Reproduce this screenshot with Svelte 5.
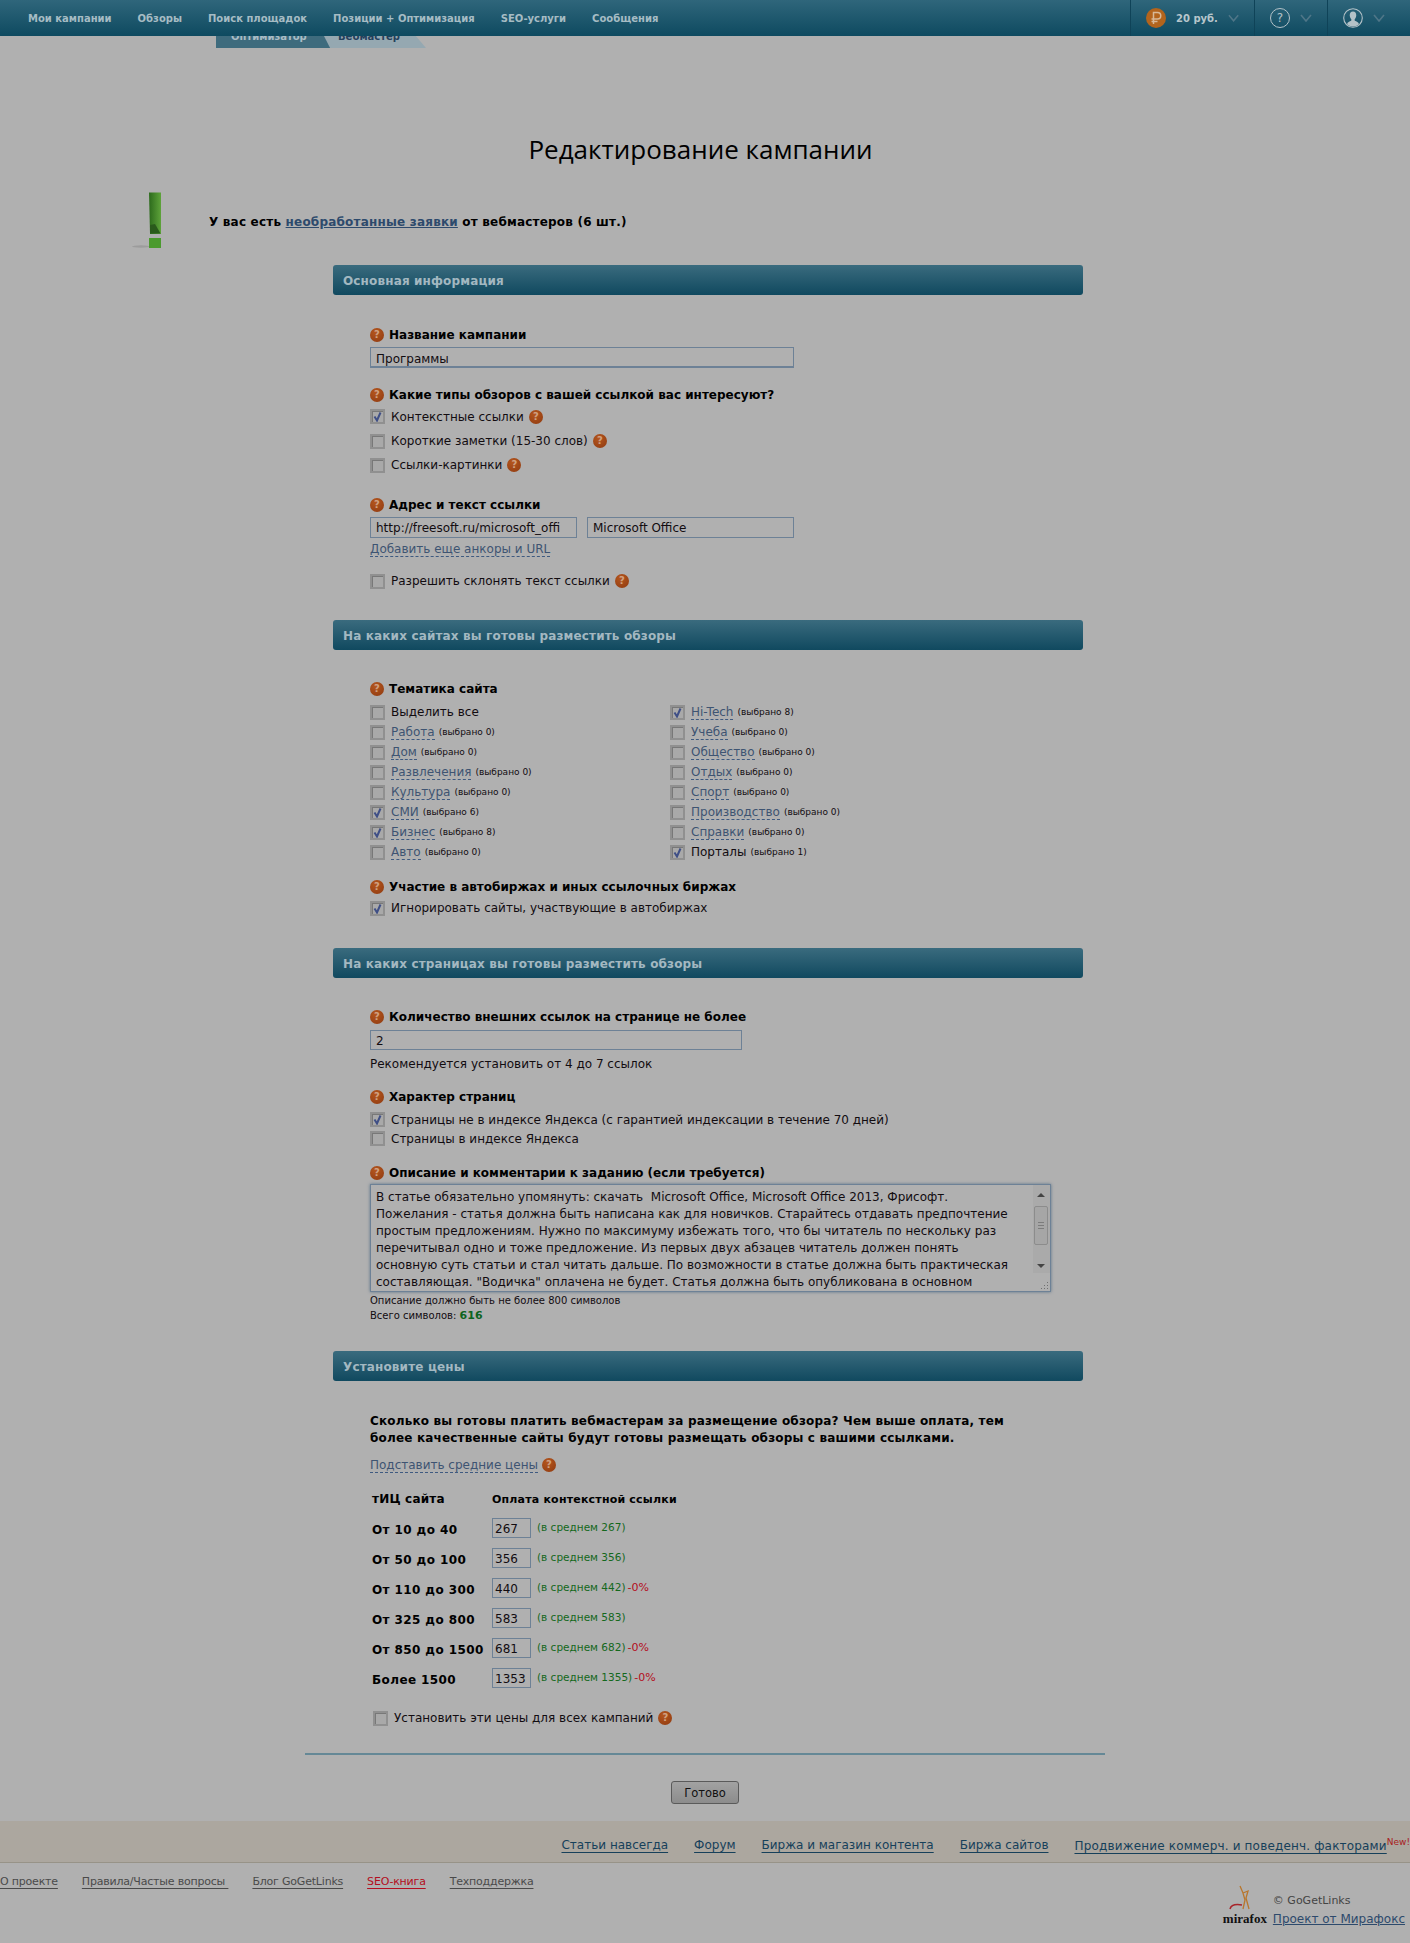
<script>
    const navItems = ["Мои кампании", "Обзоры", "Поиск площадок", "Позиции + Оптимизация", "SEO-услуги", "Сообщения"];

    const themesLeft = [
        { name: "Выделить все", plain: true },
        { name: "Работа", count: 0 },
        { name: "Дом", count: 0 },
        { name: "Развлечения", count: 0 },
        { name: "Культура", count: 0 },
        { name: "СМИ", count: 6, on: true },
        { name: "Бизнес", count: 8, on: true },
        { name: "Авто", count: 0 }
    ];
    const themesRight = [
        { name: "Hi-Tech", count: 8, on: true },
        { name: "Учеба", count: 0 },
        { name: "Общество", count: 0 },
        { name: "Отдых", count: 0 },
        { name: "Спорт", count: 0 },
        { name: "Производство", count: 0 },
        { name: "Справки", count: 0 },
        { name: "Порталы", count: 1, on: true, plainLink: true }
    ];

    const prices = [
        { range: "От 10 до 40", value: 267, avg: 267 },
        { range: "От 50 до 100", value: 356, avg: 356 },
        { range: "От 110 до 300", value: 440, avg: 442, off: true },
        { range: "От 325 до 800", value: 583, avg: 583 },
        { range: "От 850 до 1500", value: 681, avg: 682, off: true },
        { range: "Более 1500", value: 1353, avg: 1355, off: true }
    ];

    const descLines = [
        "В статье обязательно упомянуть: скачать  Microsoft Office, Microsoft Office 2013, Фрисофт.",
        "Пожелания - статья должна быть написана как для новичков. Старайтесь отдавать предпочтение",
        "простым предложениям. Нужно по максимуму избежать того, что бы читатель по нескольку раз",
        "перечитывал одно и тоже предложение. Из первых двух абзацев читатель должен понять",
        "основную суть статьи и стал читать дальше. По возможности в статье должна быть практическая",
        "составляющая. \"Водичка\" оплачена не будет. Статья должна быть опубликована в основном"
    ];

    const footerTop = ["Статьи навсегда", "Форум", "Биржа и магазин контента", "Биржа сайтов"];
    const footerBottom = ["О проекте", "Правила/Частые вопросы ", "Блог GoGetLinks", "SEO-книга", "Техподдержка"];
</script>

{#snippet help()}
    <span class="help">?</span>
{/snippet}

{#snippet check(on)}
    <span class="box">
        {#if on}
            <svg width="11" height="11" viewBox="0 0 11 11"><path d="M2.5 5.5 L5 9.5 L8.5 1.5" fill="none" stroke="#3f4f86" stroke-width="2" /></svg>
        {/if}
    </span>
{/snippet}

{#snippet chevron()}
    <svg class="chev" width="12" height="8" viewBox="0 0 12 8"><path d="M1 1 L6 7 L11 1" fill="none" stroke="#4f7688" stroke-width="1.6" /></svg>
{/snippet}

{#snippet theme(t)}
    <div class="theme">
        {@render check(t.on)}
        {#if t.plain || t.plainLink}
            <span class="cb-text">{t.name}</span>
        {:else}
            <span class="dash">{t.name}</span>
        {/if}
        {#if !t.plain}
            <span class="count">(выбрано {t.count})</span>
        {/if}
    </div>
{/snippet}

<header class="topbar">
    <nav class="nav">
        {#each navItems as item}
            <span>{item}</span>
        {/each}
    </nav>
    <div class="tools">
        <div class="tool money">
            <span class="coin">
                <svg width="12" height="14" viewBox="0 0 12 14"><path d="M3.5 13 V1.5 H7.5 A3.2 3.2 0 0 1 7.5 8 H1.5 M1.5 10.5 H7.5" fill="none" stroke="#d8b896" stroke-width="1.5" /></svg>
            </span>
            <span class="sum">20 руб.</span>
            {@render chevron()}
        </div>
        <div class="tool help-tool">
            <span class="ring">?</span>
            {@render chevron()}
        </div>
        <div class="tool user-tool">
            <svg width="20" height="20" viewBox="0 0 20 20">
                <circle cx="10" cy="10" r="9.3" fill="none" stroke="#b4c2c8" stroke-width="1.1" />
                <path d="M10 3.5 C7.5 3.5 6.5 5.5 6.8 8 C7 9.6 7.8 10.8 8.4 11.4 L8.2 12.8 C6.5 13.6 4.6 14 4 16.3 A9 9 0 0 0 16 16.3 C15.4 14 13.5 13.6 11.8 12.8 L11.6 11.4 C12.2 10.8 13 9.6 13.2 8 C13.5 5.5 12.5 3.5 10 3.5 Z" fill="#b4c2c8" />
            </svg>
            {@render chevron()}
        </div>
    </div>
</header>

<div class="tabs">
    <span class="tab tab-one">Оптимизатор</span>
    <span class="tab tab-two">Вебмастер</span>
</div>

<h1>Редактирование кампании</h1>

<div class="notice">
    <svg class="bang" width="30" height="56" viewBox="0 0 30 56">
        <defs>
            <linearGradient id="bangFill" x1="0" x2="1" y1="0" y2="0">
                <stop offset="0" stop-color="#2c6a1c" />
                <stop offset="1" stop-color="#5ea33a" />
            </linearGradient>
        </defs>
        <ellipse cx="9" cy="54.5" rx="9" ry="1.2" fill="#9c9c9c" />
        <path d="M17 0.5 H29 V42 H18 Z" fill="url(#bangFill)" />
        <path d="M18 33 L23 32 L28.5 41.5 H18 Z" fill="#2a5a1c" />
        <rect x="17" y="46" width="12" height="10" fill="#4b9a2e" />
    </svg>
    <p>У вас есть <a href="#top">необработанные заявки</a> от вебмастеров (6 шт.)</p>
</div>

<main class="form">
    <h2 class="bar">Основная информация</h2>
    <section class="body first-body">
        <div class="label top32">{@render help()}Название кампании</div>
        <div class="field wide">Программы</div>

        <div class="label top19">{@render help()}Какие типы обзоров с вашей ссылкой вас интересуют?</div>
        <div class="rows24">
            <div class="cb">{@render check(true)}<span class="cb-text">Контекстные ссылки</span>{@render help()}</div>
            <div class="cb">{@render check(false)}<span class="cb-text">Короткие заметки (15-30 слов)</span>{@render help()}</div>
            <div class="cb">{@render check(false)}<span class="cb-text">Ссылки-картинки</span>{@render help()}</div>
        </div>

        <div class="label top20">{@render help()}Адрес и текст ссылки</div>
        <div class="pair">
            <div class="field half">http://freesoft.ru/microsoft_offi</div>
            <div class="field half">Microsoft Office</div>
        </div>
        <div class="more"><span class="dash">Добавить еще анкоры и URL</span></div>
        <div class="cb lone">{@render check(false)}<span class="cb-text">Разрешить склонять текст ссылки</span>{@render help()}</div>
    </section>

    <h2 class="bar">На каких сайтах вы готовы разместить обзоры</h2>
    <section class="body second-body">
        <div class="label top31">{@render help()}Тематика сайта</div>
        <div class="themes">
            <div>
                {#each themesLeft as t}
                    {@render theme(t)}
                {/each}
            </div>
            <div>
                {#each themesRight as t}
                    {@render theme(t)}
                {/each}
            </div>
        </div>
        <div class="label top17">{@render help()}Участие в автобиржах и иных ссылочных биржах</div>
        <div class="cb row20">{@render check(true)}<span class="cb-text">Игнорировать сайты, участвующие в автобиржах</span></div>
    </section>

    <h2 class="bar">На каких страницах вы готовы разместить обзоры</h2>
    <section class="body third-body">
        <div class="label top31">{@render help()}Количество внешних ссылок на странице не более</div>
        <div class="field count-field">2</div>
        <div class="note">Рекомендуется установить от 4 до 7 ссылок</div>

        <div class="label top17">{@render help()}Характер страниц</div>
        <div class="rows19">
            <div class="cb">{@render check(true)}<span class="cb-text">Страницы не в индексе Яндекса (с гарантией индексации в течение 70 дней)</span></div>
            <div class="cb">{@render check(false)}<span class="cb-text">Страницы в индексе Яндекса</span></div>
        </div>

        <div class="label top17">{@render help()}Описание и комментарии к заданию (если требуется)</div>
        <div class="textarea">
            {#each descLines as line}
                <div class="desc-line">{line}</div>
            {/each}
            <div class="scroll">
                <span class="arrow up"></span>
                <span class="thumb"></span>
                <span class="arrow down"></span>
            </div>
            <svg class="grip" width="9" height="9" viewBox="0 0 9 9"><path d="M7 1 h1 v1 h-1 z M4 4 h1 v1 h-1 z M7 4 h1 v1 h-1 z M1 7 h1 v1 h-1 z M4 7 h1 v1 h-1 z M7 7 h1 v1 h-1 z" fill="#707070" /></svg>
        </div>
        <div class="hint">Описание должно быть не более 800 символов</div>
        <div class="hint">Всего символов: <b class="total">616</b></div>
    </section>

    <h2 class="bar">Установите цены</h2>
    <section class="body">
        <p class="lead">Сколько вы готовы платить вебмастерам за размещение обзора? Чем выше оплата, тем<br />более качественные сайты будут готовы размещать обзоры с вашими ссылками.</p>
        <div class="more avg"><span class="dash">Подставить средние цены</span>{@render help()}</div>
        <div class="prices">
            <b class="th th-one">тИЦ сайта</b>
            <b class="th">Оплата контекстной ссылки</b>
            {#each prices as p}
                <b class="range">{p.range}</b>
                <div class="price-cell">
                    <span class="price-input">{p.value}</span>
                    <span class="avg-text">(в среднем {p.avg})</span>
                    {#if p.off}<span class="off">-0%</span>{/if}
                </div>
            {/each}
        </div>
        <div class="cb all">{@render check(false)}<span class="cb-text">Установить эти цены для всех кампаний</span>{@render help()}</div>
    </section>
</main>

<hr class="rule" />

<div class="submit"><button type="button">Готово</button></div>

<div class="band">
    {#each footerTop as link}
        <a href="#top">{link}</a>
    {/each}
    <span class="last"><a href="#top">Продвижение коммерч. и поведенч. факторами</a><sup>New!</sup></span>
</div>

<footer class="foot">
    <div class="foot-links">
        {#each footerBottom as link}
            <a href="#top" class:red={link === "SEO-книга"}>{link}</a>
        {/each}
    </div>
    <div class="brand">
        <div class="logo">
            <svg width="44" height="28" viewBox="0 0 44 28">
                <path d="M17 1 L20 8 L25 6 L23 13 L26 24 M20 8 L22 15 L20 24" fill="none" stroke="#b8762c" stroke-width="1.3" />
                <path d="M7 24 C8 20 13 19 19 20" fill="none" stroke="#a8242a" stroke-width="1.5" />
            </svg>
            <span class="logo-word">mirafox</span>
        </div>
        <div class="brand-text">
            <div class="copy">© GoGetLinks</div>
            <a href="#top">Проект от Мирафокс</a>
        </div>
    </div>
</footer>

<style>
    :global(body) {
        background: #b0b0b0;
        font-family: "DejaVu Sans", Verdana, sans-serif;
        font-size: 12px;
        color: #120c10;
    }
    .topbar {
        height: 36px;
        display: flex;
        justify-content: space-between;
        background: linear-gradient(#2f667b, #0e4a60);
    }
    .nav {
        display: flex;
        gap: 26px;
        padding-left: 28px;
        align-items: center;
        font-size: 10px;
        font-weight: bold;
        color: #a6bcc4;
    }
    .tools {
        display: flex;
    }
    .tool {
        display: flex;
        align-items: center;
        gap: 10px;
        padding: 0 15px;
        border-left: 1px solid #0f4358;
        height: 36px;
        box-sizing: border-box;
    }
    .money {
        width: 124px;
    }
    .help-tool {
        width: 73px;
    }
    .user-tool {
        width: 83px;
    }
    .coin {
        flex: none;
        width: 20px;
        height: 20px;
        border-radius: 50%;
        background: #b3641c;
        display: flex;
        align-items: center;
        justify-content: center;
    }
    .sum {
        color: #b7c6cc;
        font-weight: bold;
        font-size: 10px;
        width: 42px;
        white-space: nowrap;
    }
    .ring {
        flex: none;
        width: 18px;
        height: 18px;
        border: 1px solid #b4c2c8;
        border-radius: 50%;
        color: #b4c2c8;
        text-align: center;
        line-height: 18px;
        font-size: 12px;
    }
    .tabs {
        display: flex;
        height: 12px;
        overflow: hidden;
        padding-left: 216px;
    }
    .tab {
        height: 12px;
        font-size: 10px;
        font-weight: bold;
        line-height: 2px;
        box-sizing: border-box;
    }
    .tab-one {
        width: 114px;
        background: #3e6b7d;
        color: #a9bdc6;
        padding-left: 15px;
    }
    .tab-two {
        width: 102px;
        margin-left: -6px;
        padding-left: 14px;
        background: #95a8b1;
        color: #24405c;
        clip-path: polygon(0 0, 90% 0, 100% 100%, 6% 100%);
    }
    h1 {
        margin: 79px 9px 0 0;
        height: 44px;
        line-height: 44px;
        text-align: center;
        font-family: "Open Sans", sans-serif;
        font-size: 26px;
        font-weight: normal;
        color: #000;
    }
    .notice {
        display: flex;
        align-items: center;
        margin: 21px 0 0 132px;
        height: 56px;
    }
    .bang {
        flex: none;
    }
    .notice p {
        margin: 4px 0 0 47px;
        font-weight: bold;
        letter-spacing: 0.2px;
        color: #000;
    }
    .notice a {
        color: #2d4a6c;
    }
    .form {
        width: 750px;
        margin: 17px 0 0 333px;
    }
    .bar {
        margin: 0;
        height: 30px;
        line-height: 33px;
        padding-left: 10px;
        border-radius: 3px;
        background: linear-gradient(#3a6b7e, #10495f);
        font-size: 12px;
        font-weight: bold;
        letter-spacing: 0.15px;
        color: #a3b8c1;
    }
    .body {
        padding-left: 37px;
    }
    .first-body {
        padding-bottom: 27px;
    }
    .second-body {
        padding-bottom: 30px;
    }
    .third-body {
        padding-bottom: 28px;
    }
    .label {
        display: flex;
        align-items: center;
        height: 16px;
        font-weight: bold;
        color: #000;
        white-space: nowrap;
    }
    .top32 { margin-top: 32px; }
    .top31 { margin-top: 31px; }
    .top20 { margin-top: 20px; }
    .top19 { margin-top: 19px; }
    .top17 { margin-top: 17px; }
    .help {
        flex: none;
        display: inline-block;
        width: 14px;
        height: 14px;
        margin-right: 5px;
        border-radius: 50%;
        background: radial-gradient(circle at 40% 30%, #b4561e, #8f3a10);
        color: #d0a080;
        font-size: 10px;
        font-weight: bold;
        line-height: 14px;
        text-align: center;
    }
    .field {
        box-sizing: border-box;
        height: 21px;
        line-height: 23px;
        padding-left: 5px;
        border: 1px solid #6d8196;
        border-bottom-width: 2px;
        white-space: nowrap;
        overflow: hidden;
    }
    .wide {
        width: 424px;
        margin-top: 4px;
    }
    .half {
        width: 207px;
        border-bottom-width: 1px;
        line-height: 21px;
    }
    .pair {
        display: flex;
        gap: 10px;
        width: 424px;
        margin-top: 4px;
    }
    .count-field {
        width: 372px;
        height: 20px;
        line-height: 20px;
        margin-top: 5px;
        border-bottom-width: 1px;
    }
    .rows24 {
        margin-top: 1px;
    }
    .rows24 .cb,
    .cb.lone,
    .cb.all {
        height: 24px;
    }
    .rows24 .cb:first-child {
        height: 25px;
    }
    .rows19 {
        margin-top: 5px;
    }
    .rows19 .cb {
        height: 19px;
    }
    .row20 {
        height: 20px;
        margin-top: 3px;
    }
    .cb {
        display: flex;
        align-items: center;
        white-space: nowrap;
    }
    .cb .help {
        margin-left: 5px;
        margin-right: 0;
    }
    .cb.lone {
        margin-top: 12px;
    }
    .cb.all {
        margin: 12px 0 0 3px;
    }
    .box {
        flex: none;
        box-sizing: border-box;
        display: flex;
        align-items: center;
        justify-content: center;
        width: 15px;
        height: 15px;
        margin-right: 6px;
        border: 2px solid #909090;
        box-shadow: inset 1px 1px 0 #787878;
        background: #a9a9a9;
    }
    .more {
        display: flex;
        align-items: center;
        height: 16px;
        margin-top: 3px;
    }
    .more.avg {
        margin-top: 10px;
    }
    .more .help {
        margin: 0 0 0 4px;
    }
    .dash {
        color: #3e5472;
        border-bottom: 1px dashed #3e5a80;
        line-height: 14px;
    }
    .themes {
        display: flex;
        margin-top: 5px;
    }
    .themes > div {
        width: 300px;
    }
    .theme {
        display: flex;
        align-items: center;
        height: 20px;
        white-space: nowrap;
    }
    .count {
        margin-left: 4px;
        font-size: 9px;
    }
    .note {
        height: 16px;
        line-height: 16px;
        margin-top: 6px;
    }
    .textarea {
        position: relative;
        box-sizing: border-box;
        width: 681px;
        height: 108px;
        margin-top: 3px;
        padding: 4px 5px;
        overflow: hidden;
        border: 1px solid #6d8196;
        box-shadow: 0 0 3px #5d7488;
    }
    .desc-line {
        height: 17px;
        line-height: 17px;
        white-space: pre;
    }
    .scroll {
        position: absolute;
        top: 0;
        right: 0;
        width: 17px;
        height: 88px;
        background: #aaaaaa;
    }
    .arrow {
        position: absolute;
        left: 4px;
        border-left: 4px solid transparent;
        border-right: 4px solid transparent;
    }
    .up {
        top: 8px;
        border-bottom: 4px solid #444;
    }
    .down {
        bottom: 5px;
        border-top: 4px solid #444;
    }
    .thumb {
        position: absolute;
        top: 21px;
        left: 1px;
        width: 14px;
        height: 39px;
        border: 1px solid #8c8c8c;
        border-radius: 2px;
        box-sizing: border-box;
        background: #a6a6a6;
    }
    .thumb::after {
        content: "";
        position: absolute;
        top: 15px;
        left: 3px;
        width: 6px;
        height: 7px;
        background: repeating-linear-gradient(#7c7c7c 0 1px, transparent 1px 3px);
    }
    .grip {
        position: absolute;
        right: 1px;
        bottom: 1px;
    }
    .hint {
        height: 15px;
        line-height: 15px;
        font-size: 10px;
    }
    .textarea + .hint {
        margin-top: 1px;
    }
    .total {
        color: #0d6420;
        font-size: 11px;
    }
    .lead {
        margin: 32px 0 0;
        line-height: 17px;
        font-weight: bold;
        letter-spacing: 0.18px;
        color: #000;
        white-space: nowrap;
    }
    .prices {
        display: grid;
        grid-template-columns: 122px 1fr;
        grid-auto-rows: 30px;
        align-items: center;
        margin-top: 11px;
    }
    .th {
        font-size: 11px;
        letter-spacing: 0.2px;
        color: #000;
        white-space: nowrap;
    }
    .th-one,
    .range {
        padding-left: 2px;
        white-space: nowrap;
        color: #000;
        font-size: 12px;
    }
    .range {
        padding-top: 2px;
        letter-spacing: 0.4px;
    }
    .price-cell {
        display: flex;
        align-items: center;
        margin-top: -2px;
        white-space: nowrap;
    }
    .price-input {
        box-sizing: border-box;
        width: 39px;
        height: 20px;
        line-height: 20px;
        padding-left: 2px;
        border: 1px solid #6d8196;
    }
    .avg-text {
        margin: 0 0 2px 6px;
        color: #14681c;
        font-size: 10.5px;
    }
    .off {
        margin: 0 0 2px 2px;
        color: #b40e20;
        font-size: 11px;
    }
    .rule {
        width: 800px;
        height: 2px;
        margin: 23px 0 0 305px;
        padding: 0;
        border: none;
        background: #658896;
    }
    .submit {
        display: flex;
        justify-content: center;
        margin-top: 26px;
    }
    button {
        width: 68px;
        height: 23px;
        padding: 0;
        border: 1px solid #5a5a5a;
        border-radius: 3px;
        background: linear-gradient(#a2a2a2, #8c8c8c);
        font-family: inherit;
        font-size: 11.5px;
        color: #111;
    }
    .band {
        box-sizing: border-box;
        display: flex;
        justify-content: flex-end;
        align-items: center;
        gap: 26px;
        height: 42px;
        margin-top: 17px;
        padding-top: 7px;
        background: #aca79f;
        border-bottom: 1px solid #979388;
    }
    .band a {
        color: #16405a;
        text-underline-offset: 3px;
    }
    .last a {
        letter-spacing: 0.17px;
    }
    sup {
        color: #a81c20;
        font-size: 9px;
    }
    .foot {
        display: flex;
        justify-content: space-between;
        align-items: flex-start;
    }
    .foot-links {
        display: flex;
        gap: 24px;
        margin-top: 12px;
    }
    .foot-links a {
        color: #4a4a4a;
        font-size: 11px;
        letter-spacing: -0.2px;
        white-space: pre;
        text-underline-offset: 3px;
    }
    .foot-links a.red {
        color: #b40e20;
    }
    .brand {
        display: flex;
        margin: 22px 5px 0 0;
    }
    .logo {
        display: flex;
        flex-direction: column;
        width: 46px;
    }
    .logo-word {
        margin-top: -2px;
        font-family: "Liberation Serif", serif;
        font-weight: bold;
        font-size: 13px;
        color: #111;
    }
    .brand-text {
        margin: 9px 0 0 4px;
    }
    .copy {
        height: 18px;
        color: #444;
        font-size: 11px;
    }
    .brand-text a {
        color: #2d4a6c;
        white-space: nowrap;
    }
</style>
